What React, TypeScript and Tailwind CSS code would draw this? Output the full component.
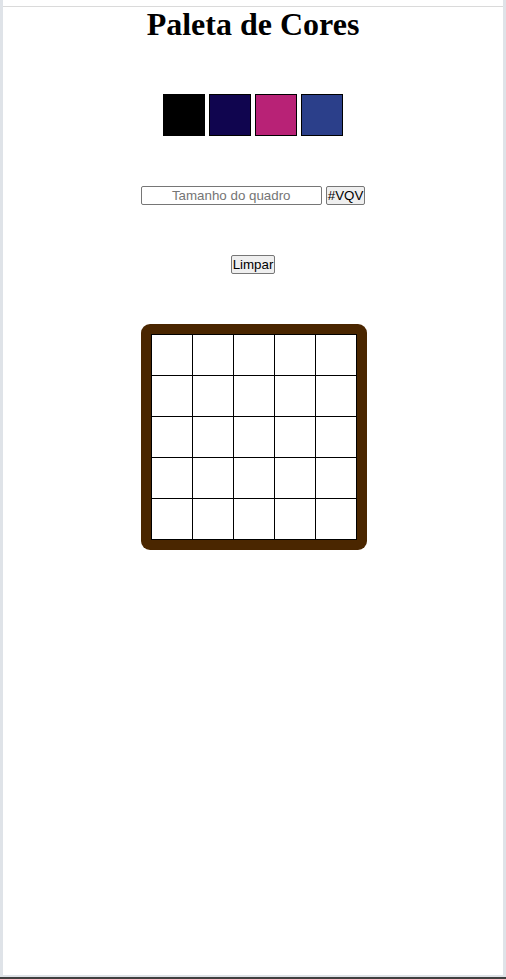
import React from "react";

const colors = ["#000000", "#10054f", "#b82276", "#2b3f8a"];

export default function App() {
  const cells = Array.from({ length: 25 });
  return (
    <div className="w-[506px] h-[979px] flex flex-col bg-[#dfe3e8] overflow-hidden" style={{ fontFamily: '"Liberation Sans", Arial, sans-serif' }}>
      <div className="flex-1 mx-[3px] bg-white flex flex-col items-center">
        <div className="h-[6px] w-full" />
        <div className="h-px w-full bg-[#dadada]" />
        <h1
          className="-mt-px h-[37px] leading-[37px] text-[32px] font-bold text-black"
          style={{ fontFamily: '"Liberation Serif", "Times New Roman", serif' }}
        >
          Paleta de Cores
        </h1>
        <div className="mt-[51px] flex gap-[4px]">
          {colors.map((c) => (
            <div key={c} className="w-[42px] h-[42px] border border-black" style={{ backgroundColor: c }} />
          ))}
        </div>
        <div className="mt-[50px] flex gap-[4px] items-center">
          <input
            type="text"
            placeholder="Tamanho do quadro"
            className="w-[181px] h-[19px] border border-[#767676] rounded-[2px] text-center text-[13.33px] placeholder:text-[#757575] outline-none px-[2px]"
          />
          <button className="h-[19px] px-px border border-[#767676] rounded-[2px] bg-[#efefef] text-[13.33px] leading-none text-black">
            #VQV
          </button>
        </div>
        <button className="mt-[50px] h-[19px] px-px border border-[#767676] rounded-[2px] bg-[#efefef] text-[13.33px] leading-none text-black">
          Limpar
        </button>
        <div className="mt-[50px] ml-[2px] p-[10px] bg-[#4a2600] rounded-[9px]">
          <div className="grid grid-cols-5 gap-px p-px bg-black">
            {cells.map((_, i) => (
              <div key={i} className="w-[40px] h-[40px] bg-white" />
            ))}
          </div>
        </div>
      </div>
      <div className="h-[2px]" />
      <div className="h-[2px] bg-[#404040]" />
    </div>
  );
}
